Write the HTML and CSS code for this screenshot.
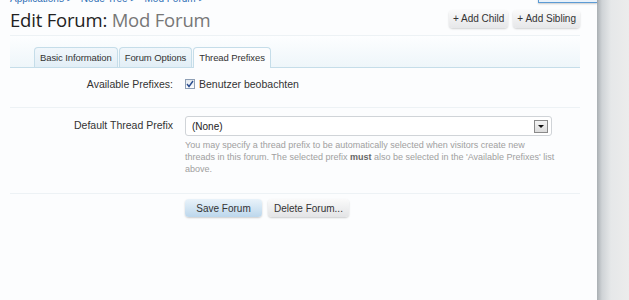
FILE: index.html
```html
<!DOCTYPE html>
<html lang="en">
<head>
    <meta charset="UTF-8">
    <title>Edit Forum: Mod Forum</title>
    <link rel="stylesheet" href="styles.css">
</head>
<body>
    <div class="screen">
        <div class="page">
            <div class="breadcrumb">Applications &gt; &nbsp; Node Tree &gt; &nbsp; Mod Forum &gt;</div>

            <div class="title-bar">
                <h1>Edit Forum: <span class="muted">Mod Forum</span></h1>
                <div class="top-ctrls">
                    <a href="#" class="ctrl-btn">+ Add Child</a>
                    <a href="#" class="ctrl-btn">+ Add Sibling</a>
                </div>
            </div>

            <div class="tab-area">
                <ul class="tabs">
                    <li>Basic Information</li>
                    <li>Forum Options</li>
                    <li class="active">Thread Prefixes</li>
                </ul>
            </div>

            <form class="form">
                <div class="row row-check">
                    <div class="label">Available Prefixes:</div>
                    <div class="field">
                        <label class="check">
                            <span class="box">
                                <svg width="8" height="8" viewBox="0 0 8 8"><path d="M1 4 L3 6.5 L7 1" fill="none" stroke="#2a4d8f" stroke-width="1.4"/></svg>
                            </span>
                            Benutzer beobachten
                        </label>
                    </div>
                </div>

                <div class="row row-select">
                    <div class="label">Default Thread Prefix</div>
                    <div class="field">
                        <div class="select">
                            <span>(None)</span>
                            <span class="arrow"></span>
                        </div>
                        <p class="explain">You may specify a thread prefix to be automatically selected when visitors create new<br>threads in this forum. The selected prefix <b>must</b> also be selected in the 'Available Prefixes' list above.</p>
                    </div>
                </div>

                <div class="row row-submit">
                    <div class="label"></div>
                    <div class="field buttons">
                        <button type="button" class="button primary">Save Forum</button>
                        <button type="button" class="button">Delete Forum...</button>
                    </div>
                </div>
            </form>

            <div class="overlay-edge"></div>
        </div>
        <div class="side"></div>
    </div>
</body>
</html>
```

FILE: styles.css
```css
html, body {
    margin: 0;
    padding: 0;
    width: 629px;
    height: 300px;
    overflow: hidden;
}
body {
    font-family: "Liberation Sans", Arial, sans-serif;
    font-size: 11px;
    color: #333;
    background-color: #fff;
}
.screen {
    display: flex;
    height: 300px;
}
.page {
    position: relative;
    width: 570px;
    padding: 0 17px 0 10px;
    background-color: #fcfdfe;
    flex-shrink: 0;
}
.side {
    flex-grow: 1;
    background: linear-gradient(to right, #a9afb3 0px, #cfd3d6 5px, #e6e8e9 14px, #ececec 32px);
}
.overlay-edge {
    position: absolute;
    top: -4px;
    left: 538px;
    right: 0;
    height: 5px;
    background-color: #e8f1fa;
    border: 1px solid #5b9bd5;
    border-right: none;
    box-shadow: 0 1px 2px rgba(0, 0, 0, 0.2);
}
.breadcrumb {
    margin-top: -7px;
    height: 11px;
    line-height: 11px;
    font-size: 10px;
    color: #2f6fb5;
    white-space: nowrap;
}
.title-bar {
    display: flex;
    justify-content: space-between;
    align-items: center;
    height: 31px;
    border-bottom: 1px solid #edf2f5;
}
h1 {
    margin: 0;
    font-family: "Open Sans", sans-serif;
    font-weight: normal;
    font-size: 18.5px;
    color: #222;
    letter-spacing: -0.2px;
}
h1 .muted {
    color: #777;
}
.top-ctrls {
    display: flex;
    gap: 5px;
    margin-top: -2px;
}
.ctrl-btn {
    display: block;
    height: 18px;
    line-height: 18px;
    padding: 0 4px;
    font-size: 10px;
    color: #333;
    text-decoration: none;
    border-radius: 4px;
    background: linear-gradient(#fafafa, #e6e7e9);
    box-shadow: 0 1px 2px rgba(0, 0, 0, 0.18);
}
.tab-area {
    padding: 11px 0 0 24px;
    background: linear-gradient(#fdfeff, #eef6fa);
    border-bottom: 1px solid #c5dde9;
}
.tabs {
    list-style: none;
    display: flex;
    gap: 1px;
    margin: 0;
    padding: 0;
}
.tabs li {
    height: 19px;
    line-height: 19px;
    padding: 0 5px;
    font-size: 9.5px;
    letter-spacing: -0.1px;
    color: #333;
    background: linear-gradient(#f1f7fb, #e2eef6);
    border: 1px solid #c5dde9;
    border-bottom: none;
    border-radius: 4px 4px 0 0;
    margin-bottom: -1px;
}
.tabs li.active {
    background-color: #fcfdfe;
    background-image: none;
    height: 20px;
}
.form {
    margin: 0;
}
.row {
    display: flex;
    gap: 12px;
    border-bottom: 1px solid #edf2f5;
}
.row .label {
    width: 163px;
    flex-shrink: 0;
    text-align: right;
    font-size: 10.5px;
    color: #333;
}
.row-check {
    height: 39px;
    align-items: center;
}
.row-check .label,
.row-check .field {
    margin-top: -7px;
}
.check {
    display: flex;
    align-items: center;
    gap: 4px;
    font-size: 10.5px;
}
.box {
    display: flex;
    align-items: center;
    justify-content: center;
    width: 8px;
    height: 8px;
    border: 1px solid #8e9fb5;
    background: linear-gradient(#e4e9ef, #fdfdfe);
}
.row-select {
    padding-top: 8px;
    height: 77px;
}
.row-select .label {
    line-height: 19px;
}
.select {
    display: flex;
    justify-content: space-between;
    align-items: center;
    width: 356px;
    height: 18px;
    padding: 0 3px 0 6px;
    border: 1px solid #d0d4d8;
    border-radius: 3px;
    background-color: #fff;
    font-size: 10px;
    color: #222;
}
.arrow {
    width: 12px;
    height: 11px;
    border: 1px solid #8a8a8a;
    background: linear-gradient(#f4f4f4, #dcdcdc);
    position: relative;
}
.arrow::after {
    content: "";
    position: absolute;
    left: 3px;
    top: 4px;
    border-left: 3px solid transparent;
    border-right: 3px solid transparent;
    border-top: 3px solid #111;
}
.explain {
    width: 380px;
    margin: 3px 0 0;
    font-size: 9px;
    line-height: 12px;
    color: #a0a0a0;
}
.explain b {
    color: #666;
}
.row-submit {
    border-bottom: none;
    padding-top: 5px;
}
.buttons {
    display: flex;
    gap: 6px;
}
.button {
    height: 18px;
    padding: 0 6px;
    font-family: "Liberation Sans", Arial, sans-serif;
    font-size: 10px;
    color: #333;
    border: none;
    border-radius: 4px;
    background: linear-gradient(#fafafa, #e3e4e6);
    box-shadow: 0 1px 2px rgba(0, 0, 0, 0.2);
}
.button.primary {
    width: 77px;
    background: linear-gradient(#e9f3fa, #bcd7ec);
}
```
